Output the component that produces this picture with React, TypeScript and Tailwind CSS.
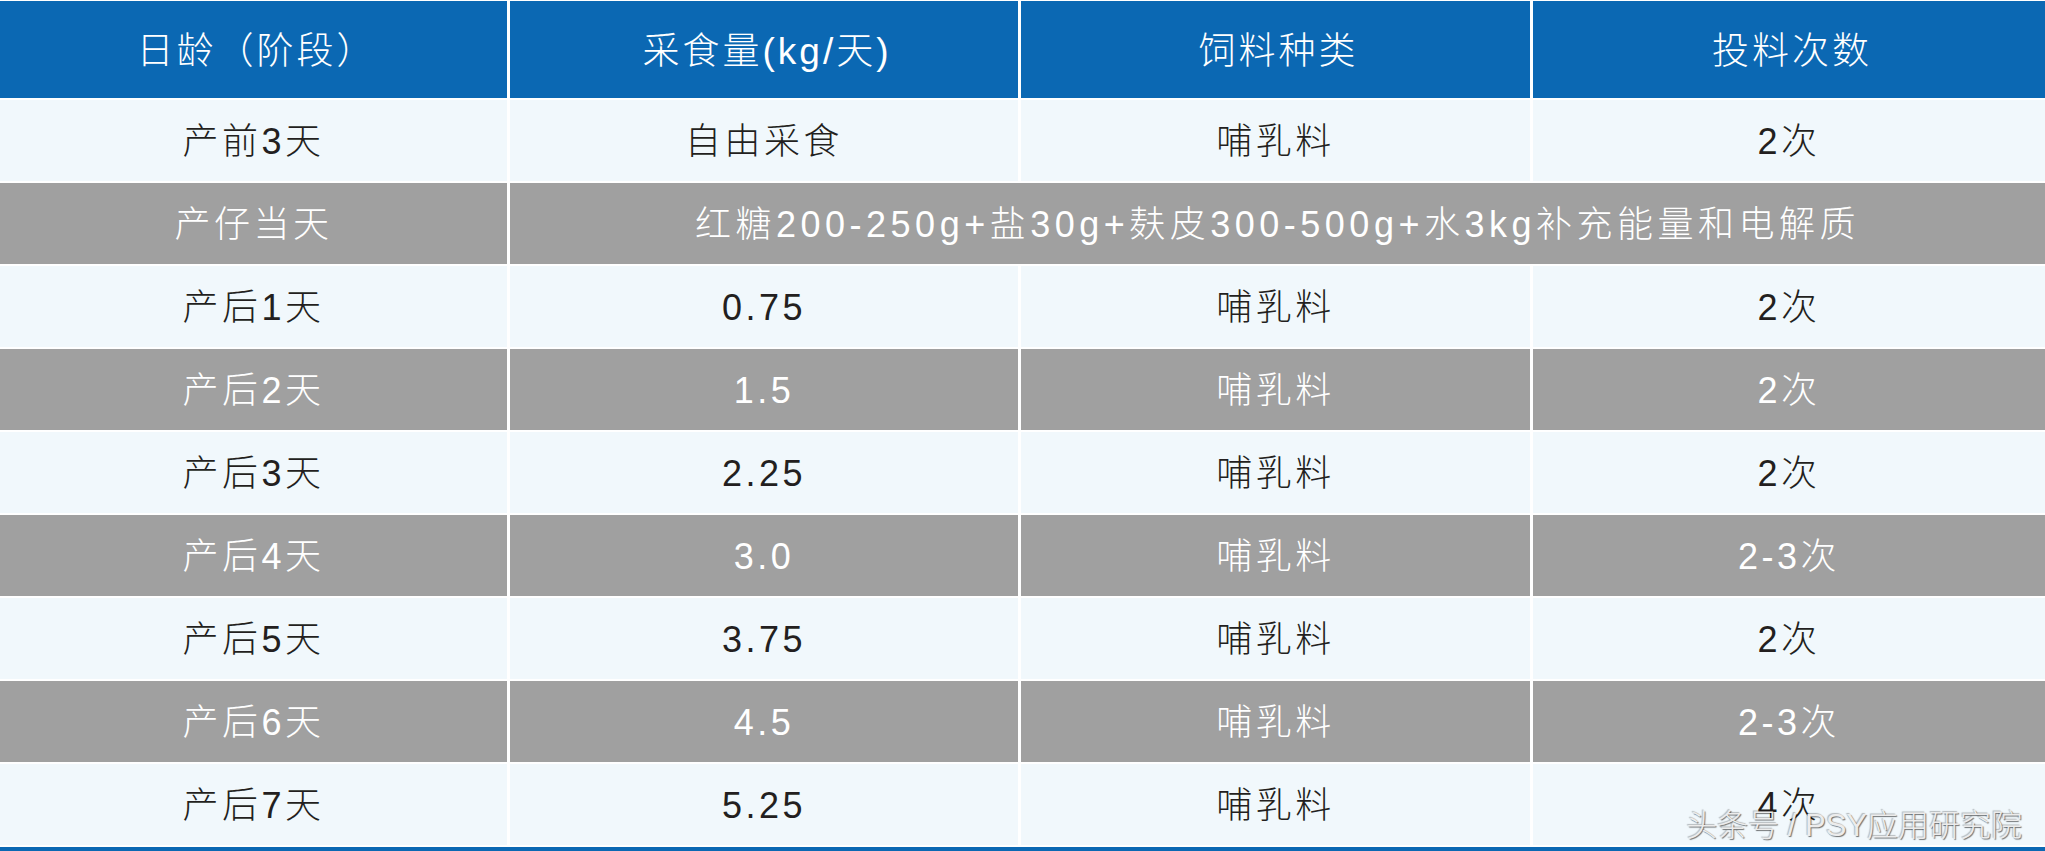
import React from 'react';

const headers = ['日龄（阶段）', '采食量(kg/天)', '饲料种类', '投料次数'];

type Row = { day: string; amount?: string; feed?: string; times?: string; note?: string; gray?: boolean };

const rows: Row[] = [
  { day: '产前3天', amount: '自由采食', feed: '哺乳料', times: '2次' },
  { day: '产仔当天', note: '红糖200-250g+盐30g+麸皮300-500g+水3kg补充能量和电解质', gray: true },
  { day: '产后1天', amount: '0.75', feed: '哺乳料', times: '2次' },
  { day: '产后2天', amount: '1.5', feed: '哺乳料', times: '2次', gray: true },
  { day: '产后3天', amount: '2.25', feed: '哺乳料', times: '2次' },
  { day: '产后4天', amount: '3.0', feed: '哺乳料', times: '2-3次', gray: true },
  { day: '产后5天', amount: '3.75', feed: '哺乳料', times: '2次' },
  { day: '产后6天', amount: '4.5', feed: '哺乳料', times: '2-3次', gray: true },
  { day: '产后7天', amount: '5.25', feed: '哺乳料', times: '4次' },
];

const font = { fontFamily: '"Liberation Sans", "Noto Sans CJK SC", sans-serif' };

export default function App() {
  return (
    <div className="relative w-[2045px] h-[851px] bg-white pt-px flex flex-col gap-[2px] font-light" style={font}>
      {/* header */}
      <div className="grid grid-cols-[507px_508px_509px_1fr] gap-[3px] h-[97px]">
        {headers.map((h) => (
          <div key={h} className="bg-[#0b68b3] flex items-center justify-center text-white text-[37px] tracking-[3px] pt-[4px] pl-[6px]">
            {h}
          </div>
        ))}
      </div>

      {rows.map((r) => {
        const cell = r.gray
          ? 'bg-[#a0a0a0] text-white'
          : 'bg-[#f1f8fc] text-[#231f20]';
        return (
          <div key={r.day} className="grid grid-cols-[507px_508px_509px_1fr] gap-[3px] h-[81px] text-[36px] tracking-[3.5px]">
            <div className={`${cell} flex items-center justify-center pt-[2px]`}>{r.day}</div>
            {r.note ? (
              <div className={`${cell} col-span-3 flex items-center justify-center pt-[2px] tracking-[4.5px]`}>{r.note}</div>
            ) : (
              <>
                <div className={`${cell} flex items-center justify-center pt-[2px]`}>{r.amount}</div>
                <div className={`${cell} flex items-center justify-center pt-[2px]`}>{r.feed}</div>
                <div className={`${cell} flex items-center justify-center pt-[2px]`}>{r.times}</div>
              </>
            )}
          </div>
        );
      })}

      <div className="h-[4px] bg-[#0b68b3]" />

      {/* watermark */}
      <div className="absolute right-[23px] top-[803px] text-[31px] text-[#ececec] [text-shadow:1px_1px_1px_rgba(0,0,0,0.55),-1px_-1px_1px_rgba(0,0,0,0.25)] whitespace-nowrap">
        头条号 / PSY应用研究院
      </div>
    </div>
  );
}
